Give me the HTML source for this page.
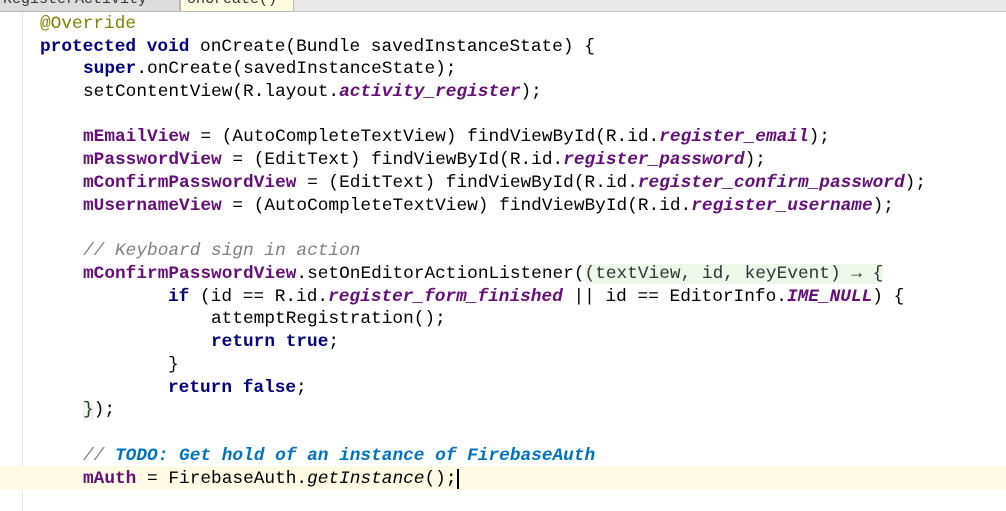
<!DOCTYPE html>
<html><head><style>
body{margin:0;width:1006px;height:511px;background:#fff;overflow:hidden;position:relative;font-family:"Liberation Mono",monospace;}
.tabs{position:absolute;left:0;top:0;width:1006px;height:11px;background:#e8e8e8;border-bottom:1px solid #c8c8c8;}
.tab{position:absolute;top:-8px;height:18px;border:1px solid #b8b8b8;font-size:15px;line-height:14px;color:#333;padding:0 6px;}
.gut{position:absolute;left:22px;top:12px;width:1px;height:499px;background:#e6e6e6;}
.cur{position:absolute;left:0;top:466px;width:1006px;height:24px;background:#fffae3;}
.l{position:absolute;font-size:17.8px;line-height:22px;white-space:pre;color:#000;margin-top:1px;}
.k{color:#000080;font-weight:bold}
.f{color:#660e7a;font-weight:bold;font-style:italic}
.fb{color:#660e7a;font-weight:bold}
.c{color:#808080;font-style:italic}
.t{color:#0073bf;font-weight:bold;font-style:italic}
.a{color:#808000}
.i{font-style:italic}
.g{background:#edf7ea;color:#333}
</style></head><body>
<div class="tabs"><div class="tab" style="left:-4px;width:170px;background:#dcdcdc">RegisterActivity</div><div class="tab" style="left:180px;width:100px;background:#fdfbe0">onCreate()</div></div>
<div class="gut"></div>
<div class="cur"></div>
<div class="l" style="left:40px;top:12px"><span class="a">@Override</span></div>
<div class="l" style="left:40px;top:35px"><span class="k">protected void</span> onCreate(Bundle savedInstanceState) {</div>
<div class="l" style="left:83px;top:57px"><span class="k">super</span>.onCreate(savedInstanceState);</div>
<div class="l" style="left:83px;top:80px">setContentView(R.layout.<span class="f">activity_register</span>);</div>
<div class="l" style="left:83px;top:125px"><span class="fb">mEmailView</span> = (AutoCompleteTextView) findViewById(R.id.<span class="f">register_email</span>);</div>
<div class="l" style="left:83px;top:148px"><span class="fb">mPasswordView</span> = (EditText) findViewById(R.id.<span class="f">register_password</span>);</div>
<div class="l" style="left:83px;top:171px"><span class="fb">mConfirmPasswordView</span> = (EditText) findViewById(R.id.<span class="f">register_confirm_password</span>);</div>
<div class="l" style="left:83px;top:194px"><span class="fb">mUsernameView</span> = (AutoCompleteTextView) findViewById(R.id.<span class="f">register_username</span>);</div>
<div class="l" style="left:83px;top:239px"><span class="c">// Keyboard sign in action</span></div>
<div class="l" style="left:83px;top:262px"><span class="fb">mConfirmPasswordView</span>.setOnEditorActionListener(<span class="g">(textView, id, keyEvent) → {</span></div>
<div class="l" style="left:168px;top:285px"><span class="k">if</span> (id == R.id.<span class="f">register_form_finished</span> || id == EditorInfo.<span class="f">IME_NULL</span>) {</div>
<div class="l" style="left:211px;top:307px">attemptRegistration();</div>
<div class="l" style="left:211px;top:330px"><span class="k">return true</span>;</div>
<div class="l" style="left:168px;top:353px">}</div>
<div class="l" style="left:168px;top:376px"><span class="k">return false</span>;</div>
<div class="l" style="left:83px;top:398px"><span class="g">}</span>);</div>
<div class="l" style="left:83px;top:444px"><span class="c">// </span><span class="t">TODO: Get hold of an instance of FirebaseAuth</span></div>
<div class="l" style="left:83px;top:467px"><span class="fb">mAuth</span> = FirebaseAuth.<span class="i">getInstance</span>();<span style="border-left:2px solid #000;margin-left:0"></span></div>
</body></html>
